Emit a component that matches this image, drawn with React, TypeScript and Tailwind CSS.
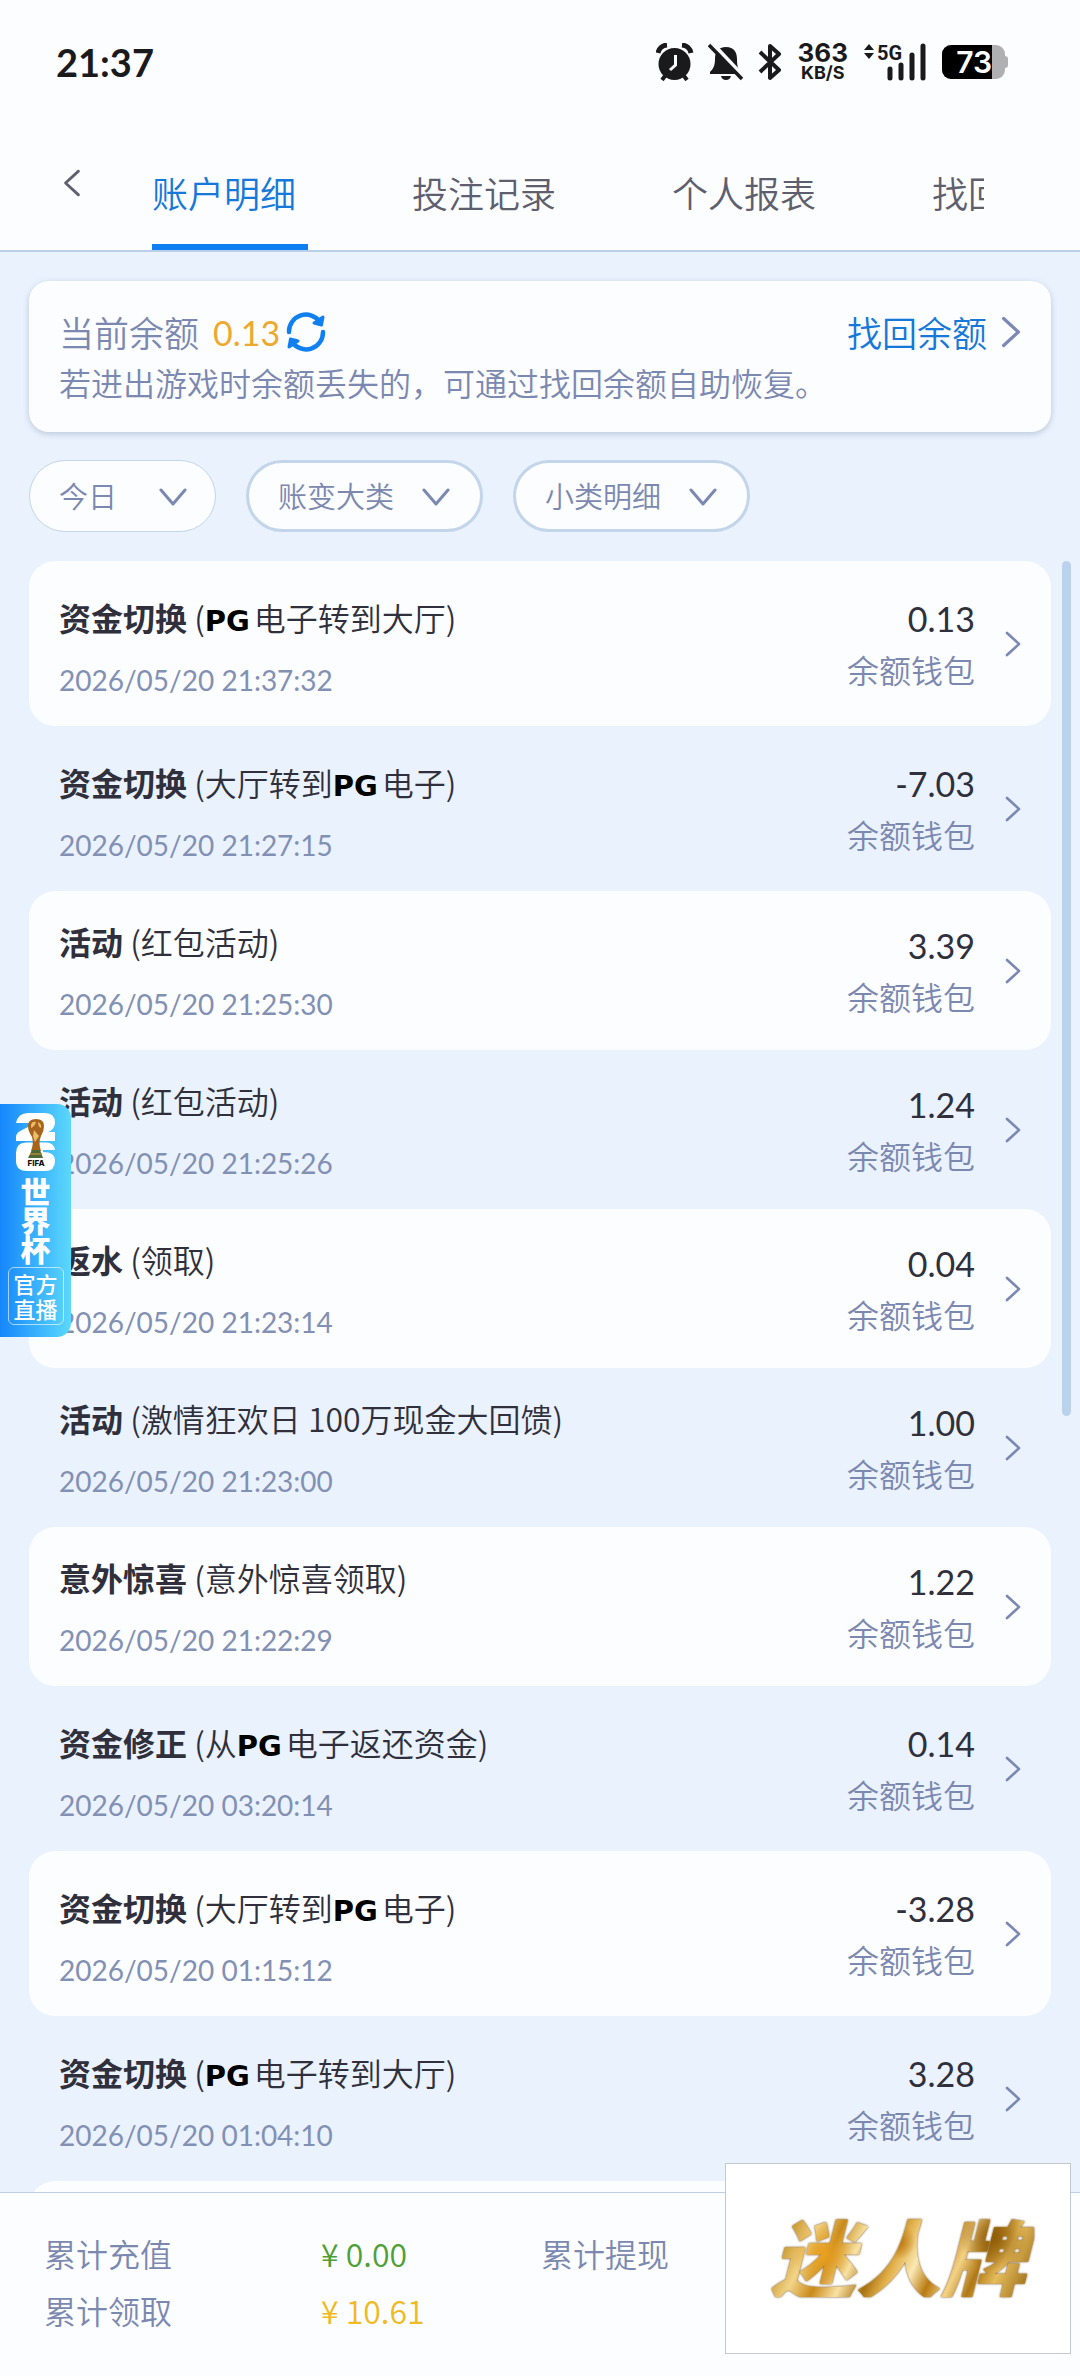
import React, { useState } from 'react';
import clsx from 'clsx';

interface RecordItem {
  id: number;
  type: string;
  before: string;
  logo?: boolean;
  after?: string;
  time: string;
  amount: string;
}

const tabs = ['账户明细', '投注记录', '个人报表', '找回余额'];

const filters = [
  { label: '今日', box: 'w-[187px] border pl-[29px]', icon: 'right-[29px]' },
  { label: '账变大类', box: 'w-[237px] border-[3px] pl-[29px]', icon: 'right-[33px]' },
  { label: '小类明细', box: 'w-[237px] border-[3px] pl-[29px]', icon: 'right-[33px]' },
];

const records: RecordItem[] = [
  { id: 1, type: '资金切换', before: '', logo: true, after: '电子转到大厅', time: '2026/05/20 21:37:32', amount: '0.13' },
  { id: 2, type: '资金切换', before: '大厅转到', logo: true, after: '电子', time: '2026/05/20 21:27:15', amount: '-7.03' },
  { id: 3, type: '活动', before: '红包活动', time: '2026/05/20 21:25:30', amount: '3.39' },
  { id: 4, type: '活动', before: '红包活动', time: '2026/05/20 21:25:26', amount: '1.24' },
  { id: 5, type: '返水', before: '领取', time: '2026/05/20 21:23:14', amount: '0.04' },
  { id: 6, type: '活动', before: '激情狂欢日 100万现金大回馈', time: '2026/05/20 21:23:00', amount: '1.00' },
  { id: 7, type: '意外惊喜', before: '意外惊喜领取', time: '2026/05/20 21:22:29', amount: '1.22' },
  { id: 8, type: '资金修正', before: '从', logo: true, after: '电子返还资金', time: '2026/05/20 03:20:14', amount: '0.14' },
  { id: 9, type: '资金切换', before: '大厅转到', logo: true, after: '电子', time: '2026/05/20 01:15:12', amount: '-3.28' },
  { id: 10, type: '资金切换', before: '', logo: true, after: '电子转到大厅', time: '2026/05/20 01:04:10', amount: '3.28' },
];

const ChevronRight = ({ className }: { className?: string }) => (
  <svg viewBox="0 0 16 26" fill="none" stroke="currentColor" strokeWidth="2.6" strokeLinecap="round" strokeLinejoin="round" className={className} aria-hidden="true">
    <path d="M2 2 L14 13 L2 24" />
  </svg>
);

const ChevronDown = ({ className }: { className?: string }) => (
  <svg viewBox="0 0 28 18" fill="none" stroke="currentColor" strokeWidth="3" strokeLinecap="round" strokeLinejoin="round" className={className} aria-hidden="true">
    <path d="M2 2 L14 16 L26 2" />
  </svg>
);

const StatusBar = () => (
  <div className="flex items-center justify-between h-[124px] pl-14 pr-[72px] text-[#1a1a1c]">
    <span className="font-['Lato','Noto_Sans_CJK_SC',sans-serif] text-[38px] leading-none font-bold">21:37</span>
    <div className="flex items-center">
      <svg viewBox="0 0 38 38" className="w-[38px] h-[38px]" aria-label="闹钟">
        <circle cx="18.5" cy="21" r="16" fill="currentColor" />
        <path d="M2 10 A10 10 0 0 1 11 2 M35 10 A10 10 0 0 0 26 2" fill="none" stroke="currentColor" strokeWidth="5" />
        <path d="M9 33 L6 37 M28 33 L31 37" stroke="currentColor" strokeWidth="4" />
        <path d="M19.500 12 V22 L14 27" fill="none" stroke="#fcfdff" strokeWidth="3" />
      </svg>
      <svg viewBox="0 0 36 38" className="w-9 h-[38px] ml-3.5" aria-label="静音">
        <path d="M18 2 V5 M18 4 C10 4 7 9 7 16 C7 23 5 26 2 29 V31 H34 C30 27 29 23 29 16 C29 9 26 4 18 4 Z M13 33 H23 Q22 37 18 37 Q14 37 13 33 Z" fill="currentColor" />
        <path d="M4 0 L36 34" stroke="#fcfdff" strokeWidth="4" />
        <path d="M1 2 L34 36" stroke="currentColor" strokeWidth="3.500" />
      </svg>
      <svg viewBox="0 0 24 38" className="w-6 h-[38px] ml-3.5" fill="none" stroke="currentColor" strokeWidth="4" strokeLinejoin="round" aria-label="蓝牙">
        <path d="M2 9 L21 27 L12 35 V3 L21 11 L2 29" />
      </svg>
      <div className="flex flex-col items-center ml-4 font-['Inter',sans-serif] font-bold">
        <span className="text-[26px] leading-[22px]">363</span>
        <span className="text-[18px] leading-[18px]">KB/S</span>
      </div>
      <svg viewBox="0 0 62 38" className="w-[62px] h-[38px] ml-4 overflow-visible" aria-label="5G">
        <path d="M0 7 L5 1 L10 7 Z M0 10 L5 16 L10 10 Z" fill="currentColor" />
        <text x="13" y="17" fontFamily="Roboto" fontSize="20" fontWeight="700" fill="currentColor">5G</text>
        <path d="M26 26 V35 M37 22 V35 M48 12 V35 M59 3 V35" stroke="currentColor" strokeWidth="5" strokeLinecap="round" />
      </svg>
      <div className="flex items-center ml-4">
        <div className="flex items-center w-[63px] h-[34px] rounded-[9px] bg-[#b0b0b3] overflow-hidden">
          <span className="flex items-center justify-end w-[50px] h-full bg-black text-white font-['Inter',sans-serif] text-[30px] leading-none font-semibold">73</span>
        </div>
        <div className="w-[3px] h-3 rounded-r bg-[#b0b0b3]" />
      </div>
    </div>
  </div>
);

const LiveBadge = () => (
  <a href="#live" className="absolute left-0 top-[1104px] flex flex-col items-center w-[71px] h-[233px] pt-2 rounded-r-[14px] bg-gradient-to-r from-[#1686fb] to-[#5cd8fb] text-white">
    <svg viewBox="0 0 40 60" className="w-10 h-[60px]" aria-label="FIFA">
      <path d="M0 11 Q2 1 12 1 H29 Q39 1 39 11 Q39 16 33 20 H39 V29 H0 V24 Q1 20 6 18 L14 14 V11 Z" fill="#fff" />
      <path d="M10 30.500 H30 Q38 30.500 39 38 H27 V40 Q39 40 39 49 Q39 59 29 59 H11 Q0 59 0 49 V41 Q0 30.500 10 30.500 Z" fill="#fff" />
      <path d="M12 14 Q12 7 20 7 Q28 7 28 14 Q28 19 25 24 Q22 31 25 39 H15 Q18 31 16 25 Q12 19 12 14 Z" fill="#a8641c" />
      <path d="M15 13 Q16 9 20 10 Q19 14 15 16 Z M22 10 Q26 12 25 16 Q22 15 22 10 Z M18 18 L23 24 L19 30 L17 24 Z" fill="#e9bd6a" />
      <path d="M16 38 H24 L27 46 H12 Z" fill="#4b6a35" />
      <path d="M14 42 H26" stroke="#b58a3c" strokeWidth="1.500" />
      <text x="20" y="54" textAnchor="middle" fontFamily="Inter" fontSize="8" fontWeight="800" fill="#111">FIFA</text>
    </svg>
    <span className="w-[30px] mt-1 text-[30px] leading-[29px] font-black">世界杯</span>
    <span className="w-14 mt-1 py-[3px] px-[5px] border border-white/60 rounded-md text-[22px] leading-[25px] font-medium text-center">官方直播</span>
  </a>
);

const RecordRow = ({ item, filled }: { item: RecordItem; filled: boolean }) => (
  <li>
    <button type="button" className={clsx('flex items-center w-full px-[30px] py-7 rounded-[26px] text-left', filled && 'bg-[#fcfdff]')}>
      <div className="flex-1">
        <p className={clsx('h-11 text-[32px] leading-[44px] whitespace-pre font-[350] text-[#2f303c]', item.logo && 'mt-1.5')}>
          <span className="font-bold">{item.type}</span> ({item.before}
          {item.logo && <span className="mr-1 font-['DejaVu_Sans',sans-serif] text-[29px] leading-none font-bold text-black">PG</span>}
          {item.after})
        </p>
        <div className="mt-[23px] font-['Lato',sans-serif] text-[28px] leading-9 text-[#8290b4]">{item.time}</div>
      </div>
      <div className="flex flex-col text-right">
        <span className="font-['Lato',sans-serif] text-[34px] leading-[50px] text-[#2f303c]">{item.amount}</span>
        <span className="text-[32px] leading-[50px] font-[350] text-[#7b88b0]">余额钱包</span>
      </div>
      <ChevronRight className="w-4 h-[26px] ml-[30px] text-[#7b88b2]" />
    </button>
  </li>
);

const App: React.FC = () => {
  const [activeTab, setActiveTab] = useState(0);

  return (
    <div className="relative flex flex-col h-screen overflow-hidden bg-[#eaf2fe] font-['Noto_Sans_CJK_SC',sans-serif]">
      <header className="shrink-0 bg-[#fcfdff] border-b-2 border-[#bccfea]">
        <StatusBar />
        <div className="flex h-[126px] pr-24">
          <button type="button" aria-label="返回" className="flex items-center w-[152px] pl-[63px] pb-2 text-[#5e5f6e]">
            <ChevronRight className="w-[18px] h-7 rotate-180" />
          </button>
          <nav className="flex flex-1 gap-[104px] overflow-hidden">
            {tabs.map((tab, i) => (
              <button
                key={tab}
                type="button"
                onClick={() => setActiveTab(i)}
                className={clsx(
                  'shrink-0 w-[156px] pt-4 border-b-[6px] text-left text-[36px] leading-none font-[350]',
                  i === activeTab ? 'border-[#0d7ff2] text-[#1678d8]' : 'border-transparent text-[#5e5f6e]'
                )}
              >
                {tab}
              </button>
            ))}
          </nav>
        </div>
      </header>

      <section className="shrink-0 mx-[29px] mt-[29px] px-[30px] py-6 rounded-[20px] bg-[#fcfdff] shadow-[0_2px_6px_rgba(120,135,160,0.4)] text-[#7b88b0]">
        <div className="flex items-center h-[54px] text-[35px] font-[350]">
          <span>当前余额</span>
          <span className="ml-3.5 font-['Lato',sans-serif] text-[34px] font-normal text-[#eca92f]">0.13</span>
          <button type="button" aria-label="刷新" className="ml-1.5">
            <svg viewBox="0 0 40 40" fill="none" stroke="#107ff0" strokeWidth="4.500" strokeLinecap="round" strokeLinejoin="round" className="w-10 h-10">
              <path d="M3 20 A17 17 0 0 1 34 10 M37 20 A17 17 0 0 1 6 30" />
              <path d="M37 5 L35.500 13 L28 11 Z M3 35 L4.500 27 L12 29 Z" fill="#107ff0" strokeWidth="3" />
            </svg>
          </button>
          <a href="#recover" className="flex items-center ml-auto text-[#1678d8]">
            找回余额
            <ChevronRight className="w-5 h-8 ml-3.5 text-[#7b88b2]" />
          </a>
        </div>
        <p className="text-[32px] leading-[46px] pb-[3px] font-[350]">若进出游戏时余额丢失的，可通过找回余额自助恢复。</p>
      </section>

      <div className="shrink-0 flex gap-[30px] px-[29px] mt-7">
        {filters.map((f) => (
          <label key={f.label} className="relative text-[#7b88b0]">
            <select aria-label={f.label} className={clsx('h-[72px] appearance-none rounded-full border-[#c3d5e9] bg-[#fcfdff] text-[29px] font-[350]', f.box)}>
              <option>{f.label}</option>
            </select>
            <ChevronDown className={clsx('absolute top-[28px] w-7 h-[18px] pointer-events-none', f.icon)} />
          </label>
        ))}
      </div>

      <main className="relative flex-1 min-h-0 overflow-hidden mt-[29px]">
        <ul className="mx-[29px]">
          {records.map((item, i) => (
            <RecordRow key={item.id} item={item} filled={i % 2 === 0} />
          ))}
          <li className="h-40 rounded-[26px] bg-[#fcfdff]" />
        </ul>
        <div className="absolute top-0 right-[9px] w-[9px] h-[855px] rounded-full bg-[#bcd2ec]" />
      </main>

      <footer className="shrink-0 h-[184px] px-11 pt-8 border-t border-[#bfd0e2] bg-[#fcfdff] text-[32px] leading-[57px] font-[350] text-[#7b88b0]">
        <dl className="grid grid-cols-[277px_220px_1fr]">
          <dt>累计充值</dt>
          <dd className="text-[#4ea035]">¥ 0.00</dd>
          <dt>累计提现</dt>
          <dt>累计领取</dt>
          <dd className="text-[#efba22]">¥ 10.61</dd>
        </dl>
      </footer>

      <LiveBadge />

      <div className="absolute right-[9px] bottom-[22px] flex items-center justify-center w-[346px] h-[191px] pb-2 border border-[#c2c7d0] bg-white">
        <span className="px-2 bg-[radial-gradient(circle_at_22%_50%,#e8a020_0,transparent_14%),radial-gradient(circle_at_50%_35%,#b8730c_0,transparent_12%),radial-gradient(circle_at_85%_30%,#8f5c08_0,transparent_14%),linear-gradient(115deg,#9a6a0c,#c28a1c_10%,#f2d488_20%,#c98a1a_28%,#f8e2a4_36%,#a87010_44%,#e2b04a_50%,#fae8b4_57%,#b97a12_64%,#f3d286_71%,#b07816_78%,#e6bc5c_85%,#8a5a08)] bg-clip-text text-[85px] leading-none font-black italic text-transparent drop-shadow-[0_0_1px_#6b4508]">迷人牌</span>
      </div>
    </div>
  );
};

export default App;
